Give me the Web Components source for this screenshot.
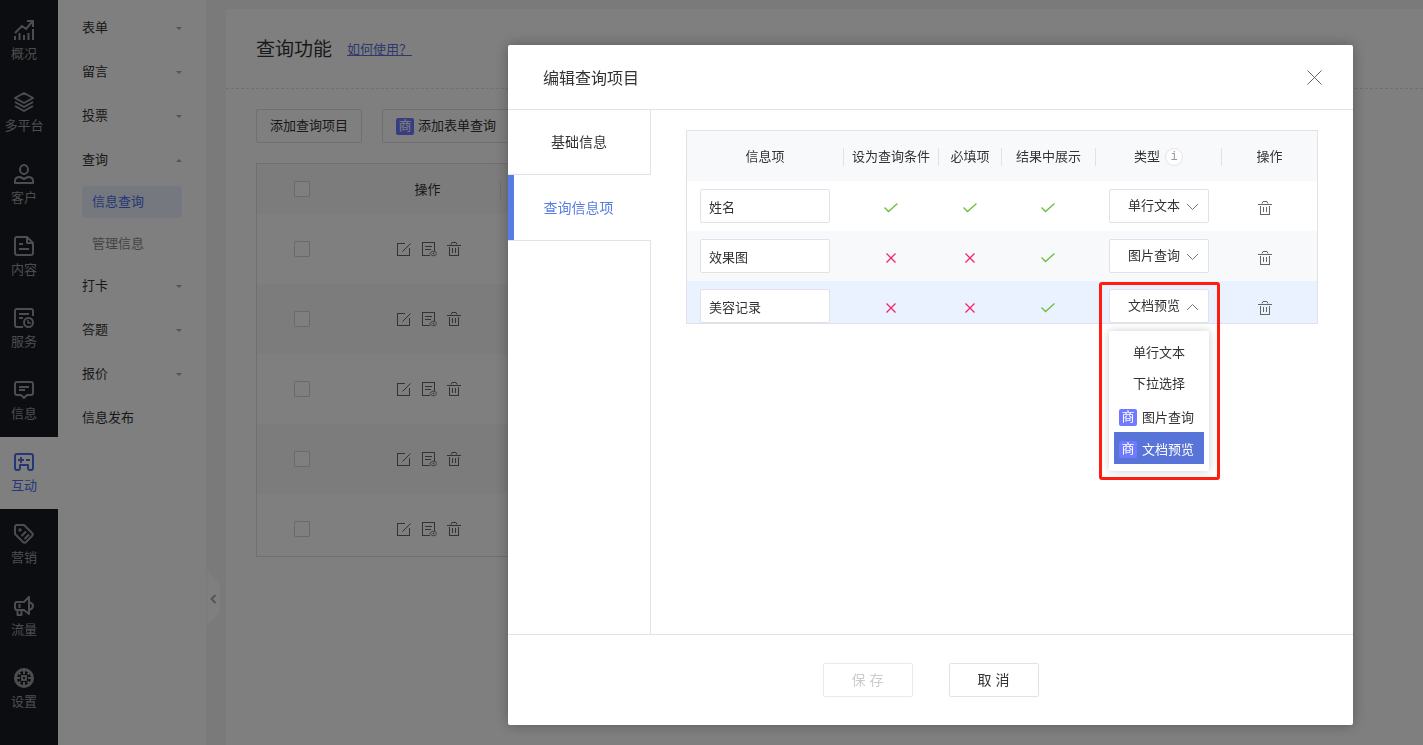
<!DOCTYPE html>
<html lang="zh-CN">
<head>
<meta charset="utf-8">
<title>查询功能</title>
<style>
body{
	margin: 0;
	background-color: #F4F4F6;
	color: #333;
	font: 13px/20px "Liberation Sans", "Noto Sans CJK SC", sans-serif;
	overflow: hidden;
}
</style>
</head>
<body>

<app-shell>
	<nav-rail slot="rail">
		<nav-item icon="chart">概况</nav-item>
		<nav-item icon="layers">多平台</nav-item>
		<nav-item icon="user">客户</nav-item>
		<nav-item icon="doc">内容</nav-item>
		<nav-item icon="service">服务</nav-item>
		<nav-item icon="message">信息</nav-item>
		<nav-item icon="game" active>互动</nav-item>
		<nav-item icon="tag">营销</nav-item>
		<nav-item icon="horn">流量</nav-item>
		<nav-item icon="wheel">设置</nav-item>
	</nav-rail>

	<side-menu slot="menu">
		<menu-entry>表单</menu-entry>
		<menu-entry>留言</menu-entry>
		<menu-entry>投票</menu-entry>
		<menu-entry open>查询
			<sub-entry slot="sub" active>信息查询</sub-entry>
			<sub-entry slot="sub">管理信息</sub-entry>
		</menu-entry>
		<menu-entry>打卡</menu-entry>
		<menu-entry>答题</menu-entry>
		<menu-entry>报价</menu-entry>
		<menu-entry plain>信息发布</menu-entry>
	</side-menu>

	<query-page></query-page>
</app-shell>

<edit-dialog heading="编辑查询项目">
	<field-table></field-table>
</edit-dialog>

<template id="app-shell">
<style>
:host{
	display: flex;
	min-height: 100vh;
}
.toggle{
	flex: none;
	display: flex;
	align-items: flex-end;
	width: 20px;
}
.toggle button{
	width: 14px;
	height: 54px;
	margin: 0 0 120px;
	padding: 0;
	border: 0;
	background: none;
	cursor: pointer;
}
.toggle svg{
	display: block;
}
main{
	flex: 1;
	min-width: 0;
	margin-top: 9px;
	background-color: #FFF;
	border-radius: 3px 0 0 0;
}
</style>
<slot name="rail"></slot>
<slot name="menu"></slot>
<div class="toggle">
	<button type="button" aria-label="收起菜单">
		<svg width="14" height="54" viewBox="0 0 14 54"><path d="M1 0l13 13v28L1 54z" fill="#FFF"/><path d="M9.500 24l-4 4 4 4" fill="none" stroke="#AAA" stroke-width="2"/></svg>
	</button>
</div>
<main><slot></slot></main>
</template>

<template id="nav-rail">
<style>
:host{
	flex: none;
	display: block;
	box-sizing: border-box;
	width: 58px;
	padding-top: 5px;
	background-color: #191B23;
}
</style>
<nav><slot></slot></nav>
</template>

<template id="nav-item">
<style>
:host{
	display: block;
	color: #999A9E;
}
a{
	display: flex;
	flex-direction: column;
	align-items: center;
	gap: 4px;
	padding: 15px 10px 13px 0;
	color: inherit;
	text-decoration: none;
	white-space: nowrap;
}
:host([active]){
	background-color: #FFF;
	color: #4A6FE8;
}
svg{
	fill: none;
	stroke: currentColor;
	stroke-width: 2;
	stroke-linejoin: round;
}
</style>
<a href="#"><svg width="20" height="20" viewBox="0 0 20 20"></svg><span><slot></slot></span></a>
</template>

<template id="side-menu">
<style>
:host{
	flex: none;
	display: block;
	box-sizing: border-box;
	width: 148px;
	padding: 6px 24px;
	background-color: #FFF;
}
</style>
<nav><slot></slot></nav>
</template>

<template id="menu-entry">
<style>
:host{
	display: block;
}
a{
	display: flex;
	align-items: center;
	justify-content: space-between;
	height: 44px;
	color: inherit;
	text-decoration: none;
}
i{
	border: 3px solid transparent;
	border-top-color: #AAA;
	border-bottom-width: 0;
}
:host([open]) i{
	border-top-width: 0;
	border-bottom: 3px solid #AAA;
}
:host([plain]) i{
	display: none;
}
.sub{
	display: none;
	flex-direction: column;
	gap: 10px;
	padding: 4px 0;
}
:host([open]) .sub{
	display: flex;
}
</style>
<a href="#"><span><slot></slot></span><i></i></a>
<div class="sub"><slot name="sub"></slot></div>
</template>

<template id="sub-entry">
<style>
:host{
	display: block;
	color: #888;
}
a{
	display: block;
	padding: 6px 10px;
	border-radius: 3px;
	color: inherit;
	text-decoration: none;
}
:host([active]){
	color: #4A6FE8;
}
:host([active]) a{
	background-color: #EBF2FF;
}
</style>
<a href="#"><slot></slot></a>
</template>

<template id="shop-badge">
<style>
:host{
	flex: none;
	display: inline-block;
	width: 18px;
	height: 17px;
	border-radius: 2px;
	background-color: #6F7AFF;
	color: #FFF;
	font-size: 13px;
	line-height: 15px;
	text-align: center;
}
</style>
<slot>商</slot>
</template>

<template id="ui-button">
<style>
:host{
	display: block;
}
button{
	display: flex;
	align-items: center;
	justify-content: center;
	gap: 4px;
	box-sizing: border-box;
	min-width: var(--button-width, 0);
	height: 34px;
	padding: 0 13px;
	border: 1px solid #E1E1E8;
	border-radius: 2px;
	background-color: #FFF;
	color: #333;
	font: inherit;
	white-space: nowrap;
	cursor: pointer;
}
button:disabled{
	border-color: #EAEAEA;
	color: #CCC;
	cursor: default;
}
</style>
<button type="button"><slot></slot></button>
</template>

<template id="icon-button">
<style>
:host{
	display: inline-block;
	vertical-align: middle;
}
button{
	display: block;
	padding: 0;
	border: 0;
	background: none;
	color: #666;
	cursor: pointer;
}
svg{
	display: block;
	fill: none;
	stroke: currentColor;
}
</style>
<button type="button"><svg width="15" height="15" viewBox="0 0 15 15"></svg></button>
</template>

<template id="query-page">
<style>
:host{
	display: block;
}
header{
	display: flex;
	align-items: center;
	gap: 15px;
	box-sizing: border-box;
	height: 80px;
	padding: 2px 30px 0;
	border-bottom: 1px dashed #E1E1E8;
}
h1{
	margin: 0;
	font-size: 19px;
	font-weight: normal;
	line-height: 28px;
}
header a{
	color: #5B72DC;
}
.content{
	padding: 20px 100px 20px 30px;
}
.tools{
	display: flex;
	gap: 20px;
	margin-bottom: 20px;
}
.list{
	border: 1px solid #E1E1E8;
}
table{
	width: 100%;
	border-collapse: collapse;
	table-layout: fixed;
}
.pick{
	width: 90px;
}
.act{
	width: 154px;
}
th, td{
	padding: 0;
	text-align: center;
	font-weight: normal;
}
th{
	height: 50px;
	background-color: #F8F9FB;
}
th div{
	height: 18px;
	margin-top: 2px;
	padding-left: 8px;
	line-height: 18px;
	border-right: 1px solid #E1E1E8;
}
td{
	height: 54px;
	padding: 8px 0;
}
tr:last-child td{
	padding-bottom: 0;
}
tr:nth-child(even) td{
	background-color: #F9F9FB;
}
input{
	display: block;
	appearance: none;
	width: 16px;
	height: 16px;
	margin: 0 auto;
	border: 1px solid #D4D4D8;
	border-radius: 1px;
	background-color: #FFF;
}
.icons{
	display: flex;
	justify-content: center;
	gap: 10px;
	padding-left: 10px;
}
</style>
<header>
	<h1>查询功能</h1>
	<a href="#">如何使用？</a>
</header>
<div class="content">
	<div class="tools">
		<ui-button>添加查询项目</ui-button>
		<ui-button><shop-badge></shop-badge>添加表单查询</ui-button>
	</div>
	<div class="list">
		<table>
			<colgroup><col class="pick"><col class="act"><col></colgroup>
			<thead>
				<tr>
					<th><input type="checkbox" aria-label="全选"></th>
					<th><div>操作</div></th>
					<th></th>
				</tr>
			</thead>
			<tbody></tbody>
		</table>
	</div>
</div>
</template>

<template id="edit-dialog">
<style>
:host{
	position: fixed;
	inset: 0;
	display: flex;
	padding: 45px 70px 20px 508px;
	background-color: rgba(0, 0, 0, 0.5);
}
.dialog{
	flex: 1;
	display: flex;
	flex-direction: column;
	min-width: 0;
	border-radius: 2px;
	background-color: #FFF;
	box-shadow: 0 0 14px rgba(0, 0, 0, 0.3);
}
header{
	display: flex;
	align-items: center;
	justify-content: space-between;
	height: 64px;
	padding: 0 31px 0 35px;
	border-bottom: 1px solid #E1E1E8;
}
h2{
	margin: 0;
	padding-top: 3px;
	font-size: 16px;
	font-weight: normal;
	line-height: 24px;
}
.body{
	flex: 1;
	display: flex;
}
.tabs{
	flex: none;
	display: flex;
	flex-direction: column;
	width: 143px;
}
.tabs button{
	box-sizing: border-box;
	height: 65px;
	padding: 0 6px;
	border: solid #E1E1E8;
	border-width: 0 1px 1px 0;
	background: none;
	color: #333;
	font: inherit;
	font-size: 14px;
	cursor: pointer;
}
.tabs button[aria-selected="true"]{
	height: 66px;
	padding-left: 0;
	padding-right: 8px;
	border-right: 0;
	box-shadow: inset 6px 0 #567DE4;
	padding-left: 6px;
	color: #567DE4;
}
.tabs span{
	flex: 1;
	border-right: 1px solid #E1E1E8;
}
.panel{
	flex: 1;
	min-width: 0;
	padding: 20px 35px;
}
footer{
	display: flex;
	justify-content: center;
	gap: 36px;
	padding: 28px 0;
	border-top: 1px solid #E1E1E8;
	font-size: 14px;
	--button-width: 90px;
}
</style>
<div class="dialog" role="dialog" aria-modal="true" aria-labelledby="heading">
	<header>
		<h2 id="heading"></h2>
		<icon-button icon="close" label="关闭"></icon-button>
	</header>
	<div class="body">
		<div class="tabs" role="tablist">
			<button type="button" role="tab" aria-selected="false">基础信息</button>
			<button type="button" role="tab" aria-selected="true">查询信息项</button>
			<span></span>
		</div>
		<div class="panel" role="tabpanel"><slot></slot></div>
	</div>
	<footer>
		<ui-button disabled>保 存</ui-button>
		<ui-button>取 消</ui-button>
	</footer>
</div>
</template>

<template id="field-table">
<style>
:host{
	display: block;
	border: 1px solid #E1E1E8;
}
table{
	width: 100%;
	border-collapse: collapse;
	table-layout: fixed;
}
th, td{
	padding: 0;
	text-align: center;
	font-weight: normal;
}
th{
	height: 50px;
	background-color: #F8F9FB;
}
th div{
	display: flex;
	align-items: center;
	justify-content: center;
	gap: 5px;
	height: 18px;
	margin-top: 2px;
	border-right: 1px solid #E1E1E8;
	white-space: nowrap;
}
th:last-child div{
	border: 0;
}
.info{
	box-sizing: border-box;
	width: 18px;
	height: 18px;
	border: 1px solid #E4E4E8;
	border-radius: 50%;
	background-color: #FFF;
	color: #999;
	font: 12px/16px "Liberation Mono", monospace;
}
td{
	height: 34px;
	padding: 8px 0;
}
tr:nth-child(even) td{
	background-color: #F8F9FB;
}
tr:last-child td{
	padding-bottom: 0;
	background-color: #EBF2FF;
}
input{
	display: block;
	box-sizing: border-box;
	width: 130px;
	height: 34px;
	margin: 0 13px;
	padding: 0 8px;
	border: 1px solid #E1E1E8;
	border-radius: 2px;
	background-color: #FFF;
	color: #333;
	font: inherit;
}
.mark{
	display: block;
	margin: 3px auto 0;
	padding-right: 2px;
	fill: none;
}
icon-button{
	padding: 4px 8px 0 0;
}
</style>
<table>
	<colgroup><col width="157"><col width="95"><col width="63"><col width="94"><col width="126"><col width="95"></colgroup>
	<thead>
		<tr>
			<th><div>信息项</div></th>
			<th><div>设为查询条件</div></th>
			<th><div>必填项</div></th>
			<th><div>结果中展示</div></th>
			<th><div>类型<span class="info">i</span></div></th>
			<th><div>操作</div></th>
		</tr>
	</thead>
	<tbody></tbody>
</table>
</template>

<template id="type-select">
<style>
:host{
	display: block;
	position: relative;
	width: 100px;
	margin: 0 auto;
}
select{
	display: block;
	appearance: none;
	box-sizing: border-box;
	width: 100%;
	height: 34px;
	padding: 0 28px 0 18px;
	border: 1px solid #E1E1E8;
	border-radius: 2px;
	background-color: #FFF;
	color: #333;
	font: inherit;
}
.arrow{
	position: absolute;
	top: 14px;
	right: 10px;
	fill: none;
	stroke: #777;
	pointer-events: none;
}
:host([open]) .arrow{
	transform: scaleY(-1);
}
.menu, .frame{
	display: none;
	position: absolute;
}
:host([open]) .menu, :host([open]) .frame{
	display: block;
}
.menu{
	top: 42px;
	left: 0;
	right: 0;
	padding: 7px 5px;
	border-radius: 2px;
	background-color: #FFF;
	box-shadow: 0 0 8px rgba(0, 0, 0, 0.2);
}
.menu button{
	display: flex;
	align-items: center;
	justify-content: center;
	gap: 5px;
	width: 100%;
	height: 31px;
	padding: 0 0 2px;
	border: 0;
	background: none;
	color: #333;
	font: inherit;
}
.menu .shop{
	justify-content: flex-start;
	height: 32px;
	padding: 3px 0 0 5px;
}
.menu [aria-selected="true"]{
	background-color: #5874D8;
	color: #FFF;
}
.frame{
	top: -7px;
	left: -10px;
	right: -11px;
	height: 192px;
	border: 3px solid #FF1D10;
	border-radius: 3px;
	pointer-events: none;
}
</style>
<select aria-label="类型"></select>
<svg class="arrow" width="13" height="8" viewBox="0 0 13 8"><path d="M1 1l5.500 5.500L12 1"/></svg>
<div class="menu" role="listbox"></div>
<div class="frame"></div>
</template>

<script>
(function( window, document, undefined ) {

	const navIcons = {
		chart: '<path d="M1 20v-4M5.500 20v-7M10 20v-5M14.500 20v-7M19 20V9M1 13l7-7 4 3 6-7M13 1h6v6" stroke-linejoin="miter"/>',
		layers: '<path d="M10 1l9 5-9 5-9-5zM1 10l9 5 9-5M1 14l9 5 9-5"/>',
		user: '<ellipse cx="10" cy="5.500" rx="4" ry="4.500"/><path d="M1 19v-2c0-3 2-4 5-4l4 2 4-2c3 0 5 1 5 4v2z"/>',
		doc: '<path d="M13 1H3a2 2 0 0 0-2 2v14a2 2 0 0 0 2 2h14a2 2 0 0 0 2-2V7zM13 1v6h6M5 8h4M5 13h10"/>',
		service: '<path d="M9 19H3a2 2 0 0 1-2-2V3a2 2 0 0 1 2-2h14a2 2 0 0 1 2 2v5M5 6h10M5 10h4"/><circle cx="14.500" cy="14.500" r="4.500"/><path d="M14 12v3h3" stroke-width="1.500"/>',
		message: '<path d="M3 2h14a2 2 0 0 1 2 2v9a2 2 0 0 1-2 2h-4l-3 3-3-3H3a2 2 0 0 1-2-2V4a2 2 0 0 1 2-2zM5 7h10M5 10h6"/>',
		game: '<path d="M3 2h14a2 2 0 0 1 2 2v12c0 1-1 2-2 2h-1c-1 0-2-1-2-2v-3H6v3c0 1-1 2-2 2H3c-1 0-2-1-2-2V4a2 2 0 0 1 2-2zM7 5v6M4 8h6M12 8h4"/>',
		tag: '<path d="M3 1h7l8 8c1 1 1 2 0 3l-6 6c-1 1-2 1-3 0l-8-8V3a2 2 0 0 1 2-2zM7.500 12L12 7.500M10.500 15l4.500-4.500"/><circle cx="6" cy="6" r=".7"/>',
		horn: '<path d="M15 1v17l-5-4H3a2 2 0 0 1-2-2V8a2 2 0 0 1 2-2h7zM15 6c3 1 4 2 4 4s-1 3-4 4M5.500 8v4M3.500 14v5h4v-5"/>',
		wheel: '<circle cx="10" cy="10" r="8.500" stroke-width="3"/><path d="M8 8h4v4H8zM10 1v5M10 14v5M1 10h5M14 10h5M4 4l2.500 2.500M13.500 13.500L16 16M4 16l2.500-2.500M13.500 6.500L16 4"/>'
	};

	const icons = {
		edit: '<path shape-rendering="crispEdges" d="M8 1.500H.5v12h12V6"/><path d="M5.500 9.500l8-8"/>',
		view: '<path shape-rendering="crispEdges" d="M8 13.500H.5V.5h12V9M3 4.500h7M3 7.500h6"/><path d="M8 11.500c2-3 5-3 7 0-2 3-5 3-7 0z"/><circle cx="11.500" cy="11.500" r=".5"/>',
		trash: '<path shape-rendering="crispEdges" d="M0 3.500h14M2.500 5v8.500h9V5M5.500 6v5M8.500 6v5"/><path d="M4 2.500l1-2h4l1 2"/>',
		close: '<path d="M.5 .5l14 14M14.500 .5l-14 14"/>'
	};

	const marks = {
		yes: '<svg class="mark" width="14" height="10" viewBox="0 0 14 10" stroke="#6FBC3B" stroke-width="1.300"><path d="M.5 4.500l4 4 9-8"/></svg>',
		no: '<svg class="mark" width="10" height="10" viewBox="0 0 10 10" stroke="#F0256B" stroke-width="1.300"><path d="M.5 .5l9 9M9.500 .5l-9 9"/></svg>'
	};

	const types = ['单行文本', '下拉选择', '图片查询', '文档预览'];

	const fields = [
		{ name: '姓名', flags: ['yes', 'yes', 'yes'], type: '单行文本' },
		{ name: '效果图', flags: ['no', 'no', 'yes'], type: '图片查询' },
		{ name: '美容记录', flags: ['no', 'no', 'yes'], type: '文档预览', open: true }
	];

	// Every element clones the template that carries its tag name.
	class BaseElement extends HTMLElement {

		connectedCallback() {
			if (this.shadowRoot) {
				return;
			}
			const template = document.getElementById( this.localName );
			this.attachShadow( { mode:'open' } ).appendChild( template.content.cloneNode( true ) );
			this.init( this.shadowRoot );
		}

		init() {}
	}

	class NavItem extends BaseElement {
		init( root ) {
			root.querySelector('svg').innerHTML = navIcons[this.getAttribute('icon')];
		}
	}

	class UiButton extends BaseElement {
		init( root ) {
			root.querySelector('button').disabled = this.hasAttribute('disabled');
		}
	}

	class IconButton extends BaseElement {
		init( root ) {
			root.querySelector('svg').innerHTML = icons[this.getAttribute('icon')];
			root.querySelector('button').setAttribute('aria-label', this.getAttribute('label'));
		}
	}

	class QueryPage extends BaseElement {
		init( root ) {
			const row = `<tr>
				<td><input type="checkbox" aria-label="选择"></td>
				<td><div class="icons">
					<icon-button icon="edit" label="编辑"></icon-button>
					<icon-button icon="view" label="查看"></icon-button>
					<icon-button icon="trash" label="删除"></icon-button>
				</div></td>
				<td></td>
			</tr>`;
			root.querySelector('tbody').innerHTML = row.repeat(5);
		}
	}

	class EditDialog extends BaseElement {
		init( root ) {
			root.querySelector('h2').textContent = this.getAttribute('heading');
		}
	}

	class FieldTable extends BaseElement {
		init( root ) {
			root.querySelector('tbody').innerHTML = fields.map(field => `<tr>
				<td><input type="text" aria-label="信息项" value="${field.name}"></td>
				${field.flags.map(flag => `<td>${marks[flag]}</td>`).join('')}
				<td><type-select value="${field.type}"${field.open ? ' open' : ''}></type-select></td>
				<td><icon-button icon="trash" label="删除"></icon-button></td>
			</tr>`).join('');
		}
	}

	class TypeSelect extends BaseElement {
		init( root ) {
			const select = root.querySelector('select');
			const menu = root.querySelector('.menu');

			select.innerHTML = types.map(type => `<option>${type}</option>`).join('');
			select.value = this.getAttribute('value');

			if (!this.hasAttribute('open')) {
				return;
			}

			// The last two types are only in the business edition.
			menu.innerHTML = types.map((type, i) => `<button type="button" role="option"
				class="${i > 1 ? 'shop' : ''}" aria-selected="${type === select.value}">${i > 1 ? '<shop-badge></shop-badge>' : ''}${type}</button>`).join('');

			menu.addEventListener('click', e => {
				const option = e.target.closest('button');
				if (option) {
					select.selectedIndex = [...menu.children].indexOf(option);
					this.removeAttribute('open');
				}
			});
		}
	}

	['app-shell', 'nav-rail', 'side-menu', 'menu-entry', 'sub-entry', 'shop-badge'].forEach(name => {
		window.customElements.define( name, class extends BaseElement {} );
	});
	window.customElements.define( 'nav-item', NavItem );
	window.customElements.define( 'ui-button', UiButton );
	window.customElements.define( 'icon-button', IconButton );
	window.customElements.define( 'type-select', TypeSelect );
	window.customElements.define( 'query-page', QueryPage );
	window.customElements.define( 'field-table', FieldTable );
	window.customElements.define( 'edit-dialog', EditDialog );
})(window, document);
</script>
</body>
</html>
